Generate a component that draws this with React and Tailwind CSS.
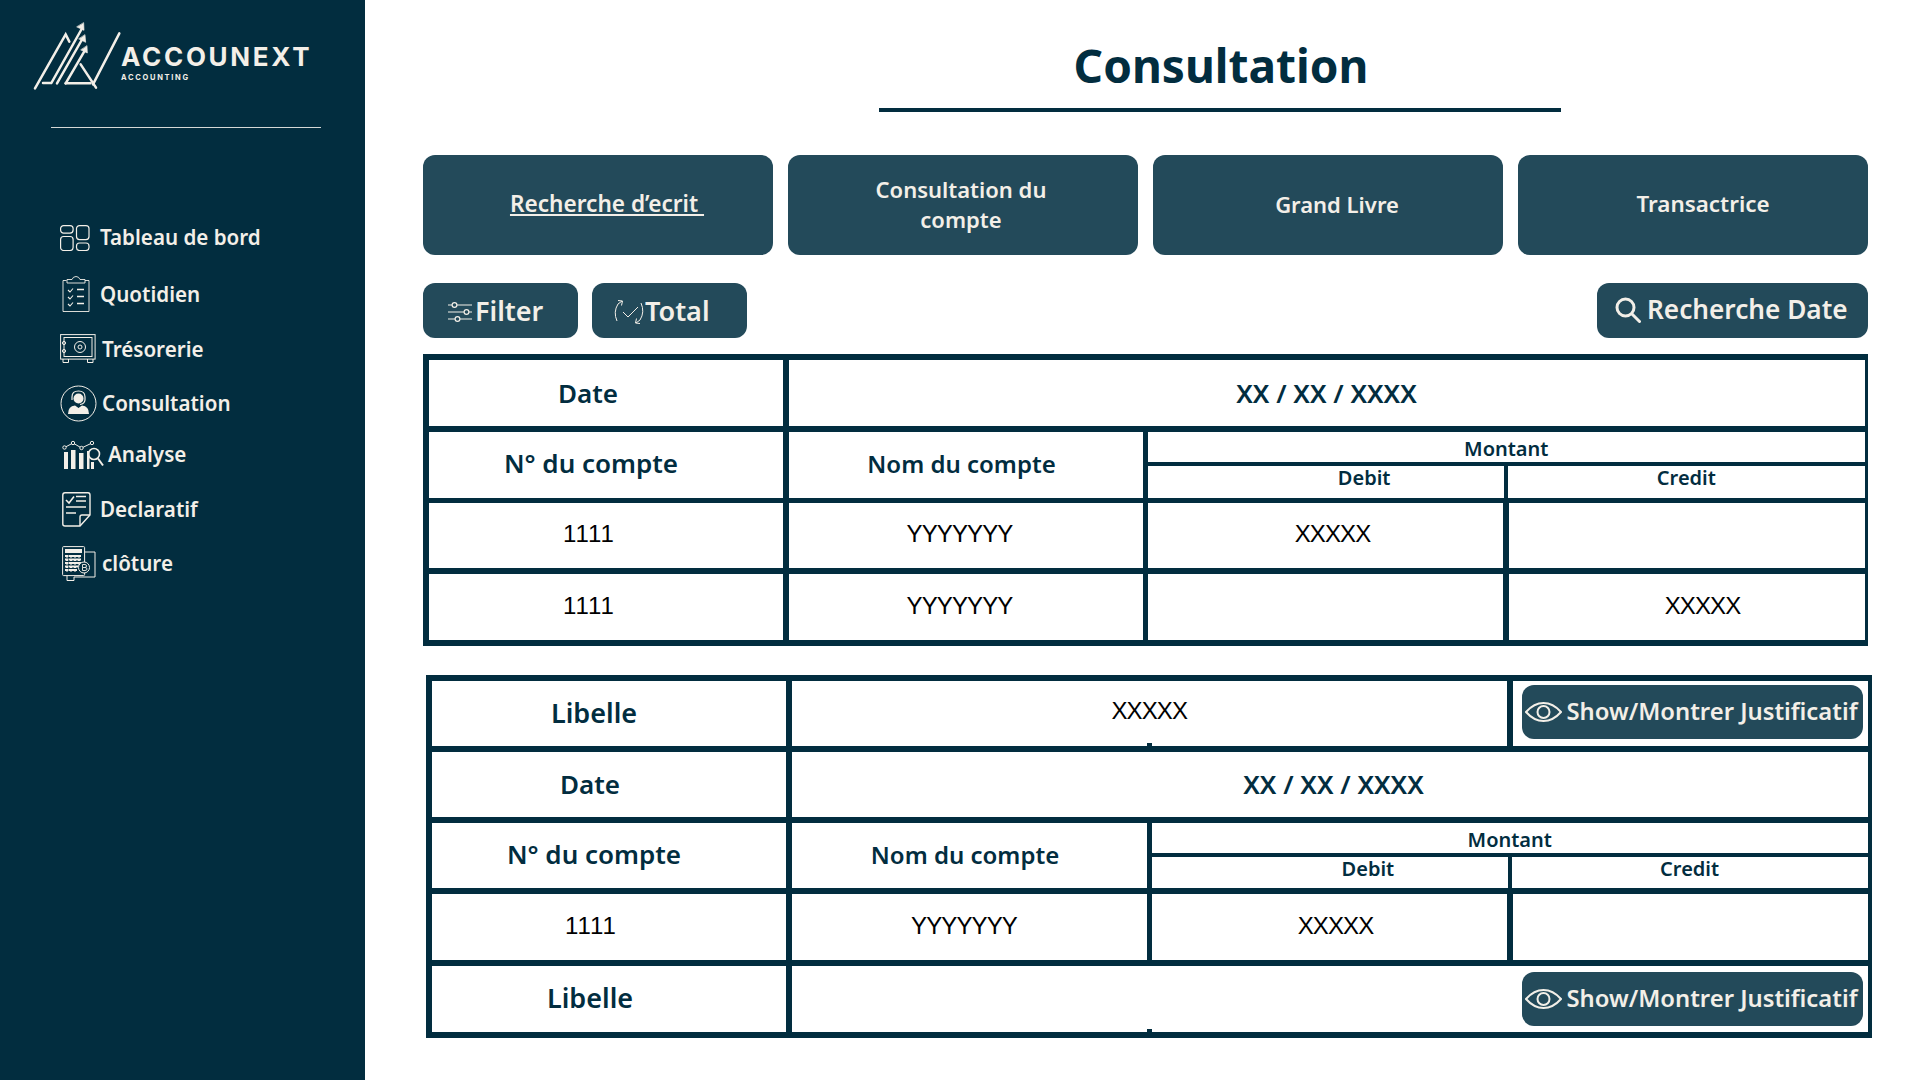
const cream = '#f3efe8'

function Logo() {
  return (
    <svg width="90" height="70" viewBox="100 60 270 210" fill="none" stroke={cream} strokeWidth="7.5" strokeLinecap="round" className="shrink-0">
      <path d="M106 262 L198 100 L209 122" />
      <path d="M130 246 H155 L246 84" />
      <path d="M172 247 L248 114" />
      <path d="M198 247 L257 146" />
      <path d="M198 247 H272" />
      <path d="M243 190 L289 260" />
      <path d="M280 250 L359 97" />
      <path d="M252 66 L253 88 L232 78 Z" fill={cream} strokeWidth="2" />
      <path d="M256 102 L258 124 L238 114 Z" fill={cream} strokeWidth="2" />
      <path d="M262 135 L263 156 L244 147 Z" fill={cream} strokeWidth="2" />
    </svg>
  )
}

function DashIcon() {
  return (
    <svg width="30" height="26" viewBox="0 0 30 26" fill="none" stroke={cream} strokeWidth="1.2">
      <rect x="0.6" y="0.6" width="12.5" height="7.5" rx="3" />
      <rect x="16.5" y="0.6" width="12.5" height="14" rx="3" />
      <rect x="0.6" y="11.5" width="12.5" height="14" rx="3" />
      <rect x="16.5" y="18" width="12.5" height="7.5" rx="3" />
    </svg>
  )
}

function ClipboardIcon() {
  return (
    <svg width="28" height="36" viewBox="0 0 28 36" fill="none" stroke={cream} strokeWidth="0.9">
      <path d="M4.5 4.5 H1 V35.5 H27 V4.5 H23" />
      <path d="M5 7 V3.5 H10 Q11 0.5 14 0.5 Q17 0.5 18 3.5 H23 V7 Z" />
      <path d="M6 14 L8 16 L11 12.5 M6 21 L8 23 L11 19.5 M6 28 L8 30 L11 26.5" strokeWidth="1.1" />
      <path d="M15 13.5 H22 M15 20.5 H22 M15 27.5 H22" strokeWidth="1.3" />
    </svg>
  )
}

function SafeIcon() {
  return (
    <svg width="36" height="30" viewBox="0 0 36 30" fill="none" stroke={cream} strokeWidth="1">
      <rect x="0.6" y="0.6" width="34.5" height="24.5" />
      <rect x="4" y="3.5" width="28" height="19" />
      <circle cx="20" cy="13" r="5.5" />
      <circle cx="20" cy="13" r="2" />
      <circle cx="4" cy="9" r="1.6" />
      <circle cx="4" cy="17" r="1.6" />
      <path d="M3 25 V28.5 H8.5 V25 M27.5 25 V28.5 H33 V25" />
    </svg>
  )
}

function AgentIcon() {
  return (
    <svg width="37" height="37" viewBox="0 0 37 37" fill="none" stroke={cream} strokeWidth="1">
      <circle cx="18.5" cy="18.5" r="17.5" />
      <circle cx="18.5" cy="13.5" r="5" fill={cream} stroke="none" />
      <path d="M12 15 V12 Q12 6 18.5 6 Q25 6 25 12 V15 M25 15 Q24.5 19 20 19.5" strokeWidth="1.2" />
      <path d="M8 29 Q8 21 15 20.5 L18.5 23 L22 20.5 Q29 21 29 29 Z" fill={cream} stroke="none" />
    </svg>
  )
}

function AnalyseIcon() {
  return (
    <svg width="42" height="30" viewBox="0 0 42 30" fill="none" stroke={cream} strokeWidth="1">
      <path d="M2.5 7.5 L11 3 L19.5 8 L30 3" />
      <circle cx="2.5" cy="7.5" r="1.7" fill="#022d3f" />
      <circle cx="11" cy="3" r="1.7" fill="#022d3f" />
      <circle cx="19.5" cy="8" r="1.7" fill="#022d3f" />
      <circle cx="30" cy="3" r="1.7" fill="#022d3f" />
      <path d="M2 12 H6 V29 H2 Z M9 10 H13.5 V29 H9 Z M17 13 H21.5 V29 H17 Z M25 11 H27.5 V29 H25 Z M29 22 H32 V29 H29 Z" fill={cream} stroke="none" />
      <circle cx="32" cy="14" r="5.5" strokeWidth="1.6" />
      <path d="M36 18.5 L41 25.5" strokeWidth="2" />
    </svg>
  )
}

function DeclareIcon() {
  return (
    <svg width="29" height="35" viewBox="0 0 29 35" fill="none" stroke={cream} strokeWidth="1.4">
      <path d="M3 0.8 H26 Q28 0.8 28 3 V23 L18 34 H3 Q0.8 34 0.8 32 V3 Q0.8 0.8 3 0.8 Z" />
      <path d="M18 34 V25 Q18 23 20 23 H28" />
      <path d="M4 8 L7 11 L12 4.5" strokeWidth="1.6" />
      <path d="M14 4.5 H24 M14 9 H24 M4 15 H24 M4 21 H14" />
    </svg>
  )
}

function CalcIcon() {
  return (
    <svg width="34" height="35" viewBox="0 0 34 35" fill="none" stroke={cream} strokeWidth="1">
      <path d="M22 6 H33 V31 H12 V34.5 H5 V27" />
      <rect x="0.6" y="0.6" width="22" height="29" rx="1" fill="#022d3f" />
      <rect x="3" y="3" width="17" height="4" fill={cream} stroke="none" />
      <path d="M3 10 H19 M3 13.5 H19 M3 17 H19 M3 20.5 H19 M3 24 H15 M5 9 V26 M9 9 V26 M13 9 V26 M17 9 V20" strokeWidth="2" strokeDasharray="2.5 1" />
      <circle cx="22" cy="21.5" r="5.5" fill="#022d3f" />
      <path d="M20.5 18.5 H23 Q24.5 18.5 24.5 20 Q24.5 21.5 23 21.5 H20.5 V18.5 M23 21.5 Q25 21.5 25 23 Q25 24.5 23 24.5 H20.5 V21.5" strokeWidth="0.9" />
    </svg>
  )
}

function FilterIcon() {
  return (
    <svg width="25" height="20" viewBox="0 0 25 20" fill="none" stroke={cream} strokeWidth="1.2" className="shrink-0">
      <path d="M0 3 H4 M9 3 H24 M0 10 H16 M21 10 H24 M0 17 H7 M12 17 H24" />
      <circle cx="6.5" cy="3" r="2.4" />
      <circle cx="18.5" cy="10" r="2.4" />
      <circle cx="9.5" cy="17" r="2.4" />
    </svg>
  )
}

function TotalIcon() {
  return (
    <svg width="30" height="24" viewBox="0 0 30 24" fill="none" stroke={cream} strokeWidth="1" className="shrink-0">
      <path d="M3 21 Q-1 12 4 4 L8 1 M4 0.5 L8.5 1 L7.5 5.5" />
      <path d="M27 3 Q31 12 26 20 L22 23 M26 23.5 L21.5 23 L22.5 18.5" />
      <path d="M9 12 L14 17 L24 7" />
    </svg>
  )
}

function SearchIcon() {
  return (
    <svg width="26" height="26" viewBox="0 0 26 26" fill="none" stroke={cream} strokeWidth="3" strokeLinecap="round" className="shrink-0">
      <circle cx="10.5" cy="10.5" r="8.5" />
      <path d="M17 17 L24.5 24.5" />
    </svg>
  )
}

function EyeIcon() {
  return (
    <svg width="37" height="20" viewBox="0 0 37 20" fill="none" stroke={cream} strokeWidth="2" className="shrink-0">
      <path d="M1 10 Q9 1 18.5 1 Q28 1 36 10 Q28 19 18.5 19 Q9 19 1 10 Z" />
      <circle cx="18.5" cy="10" r="6" />
    </svg>
  )
}

const nav = [
  { label: 'Tableau de bord', Icon: DashIcon, cls: 'mt-0', icon: 'w-[40px] pl-0', text: 'mt-[-1px]' },
  { label: 'Quotidien', Icon: ClipboardIcon, cls: 'mt-[2px]', icon: 'w-[40px] pl-[2px]', text: 'mt-[1px]' },
  { label: 'Trésorerie', Icon: SafeIcon, cls: 'mt-[1px]', icon: 'w-[42px] pl-0', text: 'ml-0' },
  { label: 'Consultation', Icon: AgentIcon, cls: 'mt-0', icon: 'w-[42px] pl-0', text: 'ml-0' },
  { label: 'Analyse', Icon: AnalyseIcon, cls: 'mt-[-2px]', icon: 'w-[48px] pl-[2px]', text: 'mt-[-1px]' },
  { label: 'Declaratif', Icon: DeclareIcon, cls: 'mt-0', icon: 'w-[40px] pl-[2px]', text: 'mt-[1px]' },
  { label: 'clôture', Icon: CalcIcon, cls: 'mt-0', icon: 'w-[42px] pl-[2px]', text: 'mt-[1px]' },
]

function Sidebar() {
  return (
    <aside className="w-[365px] shrink-0 bg-[#022d3f] text-[#f3efe8]">
      <div className="flex items-start pl-[33px] pt-[21px] h-[127px]">
        <Logo />
        <div className="ml-[-2px] pt-[23px]">
          <div className="text-[26px] leading-[26px] font-bold tracking-[2.7px]" style={{ fontFamily: 'Inter, sans-serif' }}>ACCOUNEXT</div>
          <div className="text-[7.5px] leading-[9px] mt-[3px] font-bold tracking-[1.7px]" style={{ fontFamily: 'Inter, sans-serif' }}>ACCOUNTING</div>
        </div>
      </div>
      <div className="h-px ml-[51px] w-[270px] bg-[#d5d8d6]" />
      <nav className="mt-[83px] pl-[60px] flex flex-col">
        {nav.map(({ label, Icon, cls, icon, text }) => (
          <div key={label} className={`flex items-center h-[54px] ${cls}`}>
            <div className={`shrink-0 flex items-center ${icon}`}><Icon /></div>
            <span className={`text-[20.6px] font-semibold ${text}`}>{label}</span>
          </div>
        ))}
      </nav>
    </aside>
  )
}

function Btn({ children, className }) {
  return <div className={`bg-[#234a5a] text-[#f3efe8] rounded-[12px] font-semibold ${className}`}>{children}</div>
}

// header cell, offset pads move the label off the cell centre like in the mock
function Head({ children, className = '' }) {
  return <div className={`bg-white flex items-center justify-center text-[#022d3f] font-semibold ${className}`}>{children}</div>
}

function Val({ children, className = '' }) {
  return <div className={`relative bg-white flex items-center justify-center pb-[3px] text-[24px] tracking-[-0.9px] [font-kerning:none] text-black ${className}`} style={{ fontFamily: '"Liberation Sans", sans-serif' }}>{children}</div>
}

function Montant({ shift }) {
  return (
    <div className="h-full flex flex-col gap-[4px] bg-[#022d3f]">
      <div className="h-[30px] bg-white flex items-end justify-center text-[#022d3f] font-semibold text-[20px] leading-[26px]">Montant</div>
      <div className="flex-1 grid grid-cols-2 gap-x-[4px]">
        <div className={`bg-white flex items-start justify-center text-[#022d3f] font-semibold text-[20px] leading-[24px] ${shift}`}>Debit</div>
        <div className="bg-white flex items-start justify-center text-[#022d3f] font-semibold text-[20px] leading-[24px]">Credit</div>
      </div>
    </div>
  )
}

function ShowButton() {
  return (
    <Btn className="w-[341px] h-[54px] flex items-center pl-[3px] gap-[5px] text-[23.8px]">
      <EyeIcon />
      <span className="whitespace-nowrap">Show/Montrer Justificatif</span>
    </Btn>
  )
}

export default function App() {
  return (
    <div className="flex w-[1920px] h-[1080px] overflow-hidden bg-white" style={{ fontFamily: '"Noto Sans", sans-serif' }}>
      <Sidebar />
      <main className="flex-1 min-w-0 pl-[58px]">
        <h1 className="pt-[34px] ml-[457px] w-[682px] text-center text-[#022d3f] font-bold text-[46px] leading-[62px]">Consultation</h1>
        <div className="h-[4px] w-[682px] ml-[456px] mt-[12px] bg-[#022d3f]" />

        <div className="mt-[43px] w-[1445px] grid grid-cols-4 gap-x-[15px]">
          <Btn className="h-[100px] flex items-center justify-center text-[22.6px] pl-[18px] pb-[2px]"><span className="underline">Recherche d’ecrit&nbsp;</span></Btn>
          <Btn className="h-[100px] flex items-center justify-center text-center text-[22px] leading-[30px] pb-[2px] pr-[4px]">Consultation du<br />compte</Btn>
          <Btn className="h-[100px] flex items-center justify-center text-[22px] pl-[18px] pb-[2px]">Grand Livre</Btn>
          <Btn className="h-[100px] flex items-center justify-center text-[22.4px] pl-[20px] pb-[2px]">Transactrice</Btn>
        </div>

        <div className="mt-[28px] w-[1445px] flex items-center gap-[14px]">
          <Btn className="w-[155px] h-[55px] flex items-center pl-[25px] pt-[2px] gap-[2px] text-[27px]"><FilterIcon />Filter</Btn>
          <Btn className="w-[155px] h-[55px] flex items-center pl-[22px] pt-[2px] gap-[1px] text-[27px]"><TotalIcon />Total</Btn>
          <Btn className="ml-auto w-[271px] h-[55px] flex items-center pl-[18px] pb-[2px] gap-[6px] text-[26.2px]"><SearchIcon />Recherche Date</Btn>
        </div>

        {/* first table */}
        <div className="mt-[16px] w-[1445px] bg-[#022d3f] pl-[6px] pr-[4px] py-[6px] grid grid-cols-[354px_354px_355px_356px] gap-x-[5.5px]">
          <Head className="h-[66px] pr-[36px] text-[26px]">Date</Head>
          <Head className="h-[66px] col-span-3 text-[26px]">XX / XX / XXXX</Head>

          <Head className="h-[66px] mt-[6px] pr-[30px] pb-[3px] text-[26px]">N° du compte</Head>
          <Head className="h-[66px] mt-[6px] pr-[8px] pb-[3px] text-[24px]">Nom du compte</Head>
          <div className="col-span-2 mt-[6px]"><Montant shift="pl-[76px]" /></div>

          <Val className="h-[65px] mt-[5px] pr-[36px]">1111</Val>
          <Val className="h-[65px] mt-[5px] pr-[12px]">YYYYYYY</Val>
          <Val className="h-[65px] mt-[5px] pl-[14px]">XXXXX</Val>
          <Val className="h-[65px] mt-[5px]"></Val>

          <Val className="h-[66px] mt-[6px] pr-[36px]">1111</Val>
          <Val className="h-[66px] mt-[6px] pr-[12px]">YYYYYYY</Val>
          <Val className="h-[66px] mt-[6px]"></Val>
          <Val className="h-[66px] mt-[6px] pl-[32px]">XXXXX</Val>
        </div>

        {/* second table */}
        <div className="mt-[29px] ml-[3px] w-[1446px] bg-[#022d3f] pl-[6px] pr-[4px] py-[6px] grid grid-cols-[354px_355px_355px_355px] gap-x-[5.5px]">
          <Head className="h-[65px] pr-[30px] text-[27px]">Libelle</Head>
          <Val className="h-[65px] col-span-2 pb-[6px]">
            XXXXX
            <span className="absolute left-[355px] bottom-0 w-[5px] h-[3px] bg-[#022d3f]" />
          </Val>
          <div className="h-[65px] bg-white pl-[9px] pt-[4px]"><ShowButton /></div>

          <Head className="h-[65px] mt-[6px] pr-[38px] text-[26px]">Date</Head>
          <Head className="h-[65px] mt-[6px] col-span-3 pl-[8px] text-[26px]">XX / XX / XXXX</Head>

          <Head className="h-[65px] mt-[6px] pr-[30px] pb-[2px] text-[26px]">N° du compte</Head>
          <Head className="h-[65px] mt-[6px] pr-[8px] pb-[1px] text-[24px]">Nom du compte</Head>
          <div className="col-span-2 mt-[6px]"><Montant shift="pl-[76px]" /></div>

          <Val className="h-[66px] mt-[6px] pr-[38px]">1111</Val>
          <Val className="h-[66px] mt-[6px] pr-[10px]">YYYYYYY</Val>
          <Val className="h-[66px] mt-[6px] pl-[12px]">XXXXX</Val>
          <Val className="h-[66px] mt-[6px]"></Val>

          <Head className="h-[66px] mt-[6px] pr-[38px] pb-[2px] text-[27px]">Libelle</Head>
          <div className="relative h-[66px] mt-[6px] col-span-3 bg-white flex justify-end items-center pr-[5px]">
            <span className="absolute left-[355px] bottom-0 w-[5px] h-[3px] bg-[#022d3f]" />
            <ShowButton />
          </div>
        </div>
      </main>
    </div>
  )
}
